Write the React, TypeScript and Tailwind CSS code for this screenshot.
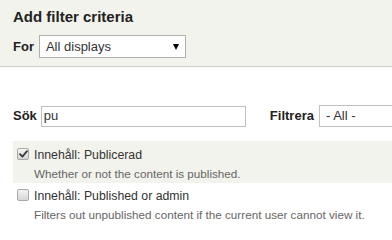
const filters = [
  {
    label: 'Innehåll: Publicerad',
    description: 'Whether or not the content is published.',
    checked: true,
  },
  {
    label: 'Innehåll: Published or admin',
    description: 'Filters out unpublished content if the current user cannot view it.',
    checked: false,
  },
]

function Checkbox({ checked }: { checked: boolean }) {
  return (
    <span className="mt-[1px] flex h-[12px] w-[12px] shrink-0 items-center justify-center rounded-[2px] border border-[#a8a8a8] bg-gradient-to-b from-[#f4f4f4] to-[#d6d6d6]">
      {checked && (
        <svg width="9" height="8" viewBox="0 0 9 8">
          <path d="M1 4.2 L3.4 6.6 L8 1.2" fill="none" stroke="#3a3a3a" strokeWidth="1.8" strokeLinecap="round" strokeLinejoin="round" />
        </svg>
      )}
    </span>
  )
}

export default function App() {
  return (
    <div className="h-[240px] w-[392px] overflow-hidden bg-white font-['Liberation_Sans',Arial,sans-serif] text-[#333]">
      {/* Header */}
      <div className="h-[67px] border-b border-[#cccccc] bg-[#f3f3ed] px-[13px] pt-[8px]">
        <h2 className="text-[15px] font-bold leading-[18px] text-[#222]">Add filter criteria</h2>
        <div className="mt-[9px] flex items-center gap-[5px]">
          <span className="text-[13px] font-bold text-[#222]">For</span>
          <div className="flex h-[23px] w-[147px] items-center justify-between border border-[#b0b0b0] bg-white pl-[6px] pr-[6px] text-[13px] text-[#333]">
            <span>All displays</span>
            <span className="h-0 w-0 border-x-[3px] border-t-[6px] border-x-transparent border-t-black" />
          </div>
        </div>
      </div>

      {/* Search row */}
      <div className="mt-[38px] flex items-center px-[13px]">
        <span className="text-[13px] font-bold text-[#222]">Sök</span>
        <div className="ml-[4px] flex h-[21px] w-[205px] shrink-0 items-center border border-[#c0c0c0] pl-[2px] text-[13px] text-[#333]">
          pu
        </div>
        <span className="ml-[24px] text-[13px] font-bold text-[#222]">Filtrera</span>
        <div className="ml-[5px] flex h-[22px] w-[120px] shrink-0 items-center border border-[#c0c0c0] pl-[6px] text-[13px] text-[#333]">
          - All -
        </div>
      </div>

      {/* Filter list */}
      <div className="ml-[13px] mt-[14px]">
        {filters.map((f) => (
          <div key={f.label} className={f.checked ? 'bg-[#f3f3ed] pl-[4px] pt-[6px]' : 'pl-[4px] pt-[5px]'}>
            <div className="flex items-start gap-[5px]">
              <Checkbox checked={f.checked} />
              <div>
                <div className="-mt-[1px] text-[12.3px] leading-[18px] text-[#333]">{f.label}</div>
                <div className="mt-[1px] text-[11.7px] leading-[18px] text-[#666]">{f.description}</div>
              </div>
            </div>
          </div>
        ))}
      </div>
    </div>
  )
}
